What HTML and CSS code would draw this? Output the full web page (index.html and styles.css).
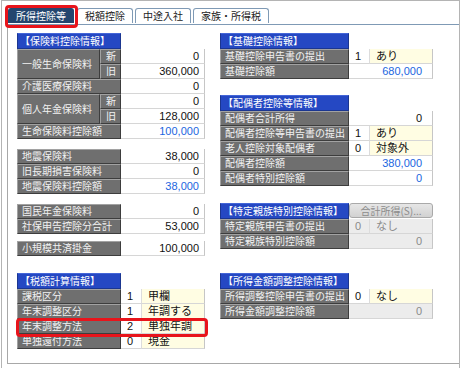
FILE: index.html
```html
<!DOCTYPE html>
<html lang="ja">
<head>
<meta charset="utf-8">
<link rel="stylesheet" href="styles.css">
</head>
<body>
<div class="frame">
  <div class="tabs">
    <div class="tab active">所得控除等</div>
    <div class="tab">税額控除</div>
    <div class="tab">中途入社</div>
    <div class="tab">家族・所得税</div>
  </div>
  <div class="mark mark-tab"></div>
  <div class="panel">
    <div class="col col-left">
      <div class="grp">
        <div class="hdr hdr-l">【保険料控除情報】</div>
        <div class="tbl">
          <div class="pair">
            <div class="lbl big">一般生命保険料</div>
            <div class="subs">
              <div class="row"><div class="lbl sub">新</div><div class="val">0</div></div>
              <div class="row"><div class="lbl sub">旧</div><div class="val">360,000</div></div>
            </div>
          </div>
          <div class="row"><div class="lbl wl">介護医療保険料</div><div class="val">0</div></div>
          <div class="pair">
            <div class="lbl big">個人年金保険料</div>
            <div class="subs">
              <div class="row"><div class="lbl sub">新</div><div class="val">0</div></div>
              <div class="row"><div class="lbl sub">旧</div><div class="val">128,000</div></div>
            </div>
          </div>
          <div class="row"><div class="lbl wl">生命保険料控除額</div><div class="val blue">100,000</div></div>
        </div>
      </div>
      <div class="grp g2">
        <div class="tbl">
          <div class="row"><div class="lbl wl">地震保険料</div><div class="val">38,000</div></div>
          <div class="row"><div class="lbl wl">旧長期損害保険料</div><div class="val">0</div></div>
          <div class="row"><div class="lbl wl">地震保険料控除額</div><div class="val blue">38,000</div></div>
        </div>
      </div>
      <div class="grp g3">
        <div class="tbl">
          <div class="row"><div class="lbl wl">国民年金保険料</div><div class="val">0</div></div>
          <div class="row"><div class="lbl wl">社保申告控除分合計</div><div class="val">53,000</div></div>
        </div>
      </div>
      <div class="grp g4">
        <div class="tbl">
          <div class="row"><div class="lbl wl">小規模共済掛金</div><div class="val">100,000</div></div>
        </div>
      </div>
      <div class="grp g5">
        <div class="hdr hdr-l">【税額計算情報】</div>
        <div class="tbl">
          <div class="row"><div class="lbl wl">課税区分</div><div class="code">1</div><div class="txt">甲欄</div></div>
          <div class="row"><div class="lbl wl">年末調整区分</div><div class="code">1</div><div class="txt">年調する</div></div>
          <div class="row"><div class="lbl wl">年末調整方法</div><div class="code">2</div><div class="txt">単独年調</div></div>
          <div class="row"><div class="lbl wl">単独還付方法</div><div class="code">0</div><div class="txt">現金</div></div>
        </div>
        <div class="mark mark-row"></div>
      </div>
    </div>
    <div class="col col-right">
      <div class="grp">
        <div class="hdr hdr-r">【基礎控除情報】</div>
        <div class="tbl">
          <div class="row"><div class="lbl wr">基礎控除申告書の提出</div><div class="code">1</div><div class="txt">あり</div></div>
          <div class="row"><div class="lbl wr">基礎控除額</div><div class="val vr blue">680,000</div></div>
        </div>
      </div>
      <div class="grp r2">
        <div class="hdr hdr-r">【配偶者控除等情報】</div>
        <div class="tbl">
          <div class="row"><div class="lbl wr">配偶者合計所得</div><div class="val vr">0</div></div>
          <div class="row"><div class="lbl wr">配偶者控除等申告書の提出</div><div class="code">1</div><div class="txt">あり</div></div>
          <div class="row"><div class="lbl wr">老人控除対象配偶者</div><div class="code">0</div><div class="txt">対象外</div></div>
          <div class="row"><div class="lbl wr">配偶者控除額</div><div class="val vr blue">380,000</div></div>
          <div class="row"><div class="lbl wr">配偶者特別控除額</div><div class="val vr blue">0</div></div>
        </div>
      </div>
      <div class="grp r3">
        <div class="hrow">
          <div class="hdr hdr-r">【特定親族特別控除情報】</div>
          <div class="btn">合計所得(S)...</div>
        </div>
        <div class="tbl">
          <div class="row"><div class="lbl wr">特定親族申告書の提出</div><div class="code dis">0</div><div class="txt dis">なし</div></div>
          <div class="row"><div class="lbl wr">特定親族特別控除額</div><div class="val vr dis">0</div></div>
        </div>
      </div>
      <div class="grp r4">
        <div class="hdr hdr-r">【所得金額調整控除情報】</div>
        <div class="tbl">
          <div class="row"><div class="lbl wr">所得調整控除申告書の提出</div><div class="code">0</div><div class="txt">なし</div></div>
          <div class="row"><div class="lbl wr">所得金額調整控除額</div><div class="val vr dis">0</div></div>
        </div>
      </div>
    </div>
  </div>
</div>
</body>
</html>
```

FILE: styles.css
```css
* { box-sizing: border-box; }
html, body { margin: 0; padding: 0; background: #fff; }
body {
  width: 460px; height: 368px; overflow: hidden;
  font-family: "Liberation Sans", "Noto Sans CJK JP", sans-serif;
  font-size: 11px; color: #111;
}
.frame {
  position: relative;
  margin-left: 1px;
  width: 459px; height: 368px;
  border: 1px solid #b4b4b4;
  border-bottom: none;
}
.tabs {
  display: flex;
  padding: 7px 0 0 6px;
  height: 23px;
  gap: 2px;
}
.tab {
  height: 15px;
  padding: 0 7px;
  border: 1px solid #7f9ab5;
  border-bottom: none;
  border-radius: 3px 3px 0 0;
  font-family: "Noto Sans CJK JP", sans-serif;
  font-size: 10px; line-height: 14px;
  color: #222;
  background: #fff;
}
.tab.active {
  background: #24466f;
  color: #fff;
  border-color: #24466f;
  margin-right: 1px;
}
.mark {
  position: absolute;
  border: 3px solid #e8141b;
  border-radius: 4px;
  pointer-events: none;
}
.mark-tab { left: 3px; top: 4px; width: 73px; height: 23px; }
.panel {
  margin-left: 5px;
  height: 340px;
  border-top: 1px solid #7f9ab5;
  border-left: 1px solid #a8a8a8;
  border-bottom: 1px solid #a8a8a8;
  display: flex;
  padding: 8px 0 0 9px;
  gap: 15px;
}
.col { display: flex; flex-direction: column; }
.col-left { width: 188px; }
.col-right { width: 213px; }
.grp { position: relative; display: flex; flex-direction: column; }
.g2 { margin-top: 10px; }
.g3 { margin-top: 10px; }
.g4 { margin-top: 7px; }
.g5 { margin-top: 17px; }
.r2 { margin-top: 16px; }
.r3 { margin-top: 17px; }
.r4 { margin-top: 24px; }
.hdr {
  height: 16px;
  background: #2548c3;
  border: 1px solid #1b3690;
  border-top-color: #4466d8;
  color: #fff;
  font-family: "Noto Sans CJK JP", sans-serif;
  font-size: 10px; line-height: 13px;
  padding-left: 2px;
  white-space: nowrap;
}
.hdr-l { width: 104px; }
.hdr-r { width: 129px; }
.hrow { display: flex; }
.btn {
  width: 84px; height: 15px;
  margin-top: 0;
  border: 1px solid #a9a9a9;
  border-radius: 3px;
  background: linear-gradient(#e6e6e6, #d2d2d2);
  color: #8c8c8c;
  font-size: 10px; line-height: 13px;
  text-align: center;
  font-family: "Noto Sans CJK JP", sans-serif;
}
.tbl { display: flex; flex-direction: column; }
.row { display: flex; height: 15px; }
.pair { display: flex; }
.subs { display: flex; flex-direction: column; flex: 1; }
.lbl {
  background: #6f6f6f;
  border: 1px solid;
  border-color: #a2a2a2 #3d3d3d #3d3d3d #a2a2a2;
  color: #f2f2f2;
  font-family: "Noto Sans CJK JP", sans-serif;
  font-size: 10px; line-height: 12px;
  padding-left: 4px;
  white-space: nowrap;
  overflow: hidden;
}
.lbl.big { width: 83px; height: 30px; line-height: 27px; }
.lbl.sub { width: 21px; padding-left: 5px; }
.lbl.wl { width: 104px; }
.lbl.wr { width: 129px; }
.val {
  flex: 1;
  background: #fff;
  border-bottom: 1px solid #d6d6d6;
  border-right: 1px solid #c6c6c6;
  text-align: right;
  padding-right: 5px;
  line-height: 14px;
  font-size: 11px;
}
.val.vr { width: 84px; flex: none; padding-right: 10px; }
.blue { color: #1b66e0; }
.code {
  width: 21px;
  background: #fff;
  border-bottom: 1px solid #d6d6d6;
  border-right: 1px solid #dcdcdc;
  padding-left: 6px;
  line-height: 14px;
}
.txt {
  flex: 1;
  background: #fffde3;
  border-bottom: 1px solid #d6d6d6;
  border-right: 1px solid #c6c6c6;
  padding-left: 6px;
  line-height: 14px;
  font-size: 11px;
}
.col-right .txt { flex: none; width: 63px; }
.dis { background: #ececec; color: #8a8a8a; }
.mark-row { left: -1px; top: 45px; width: 192px; height: 19px; }
```
